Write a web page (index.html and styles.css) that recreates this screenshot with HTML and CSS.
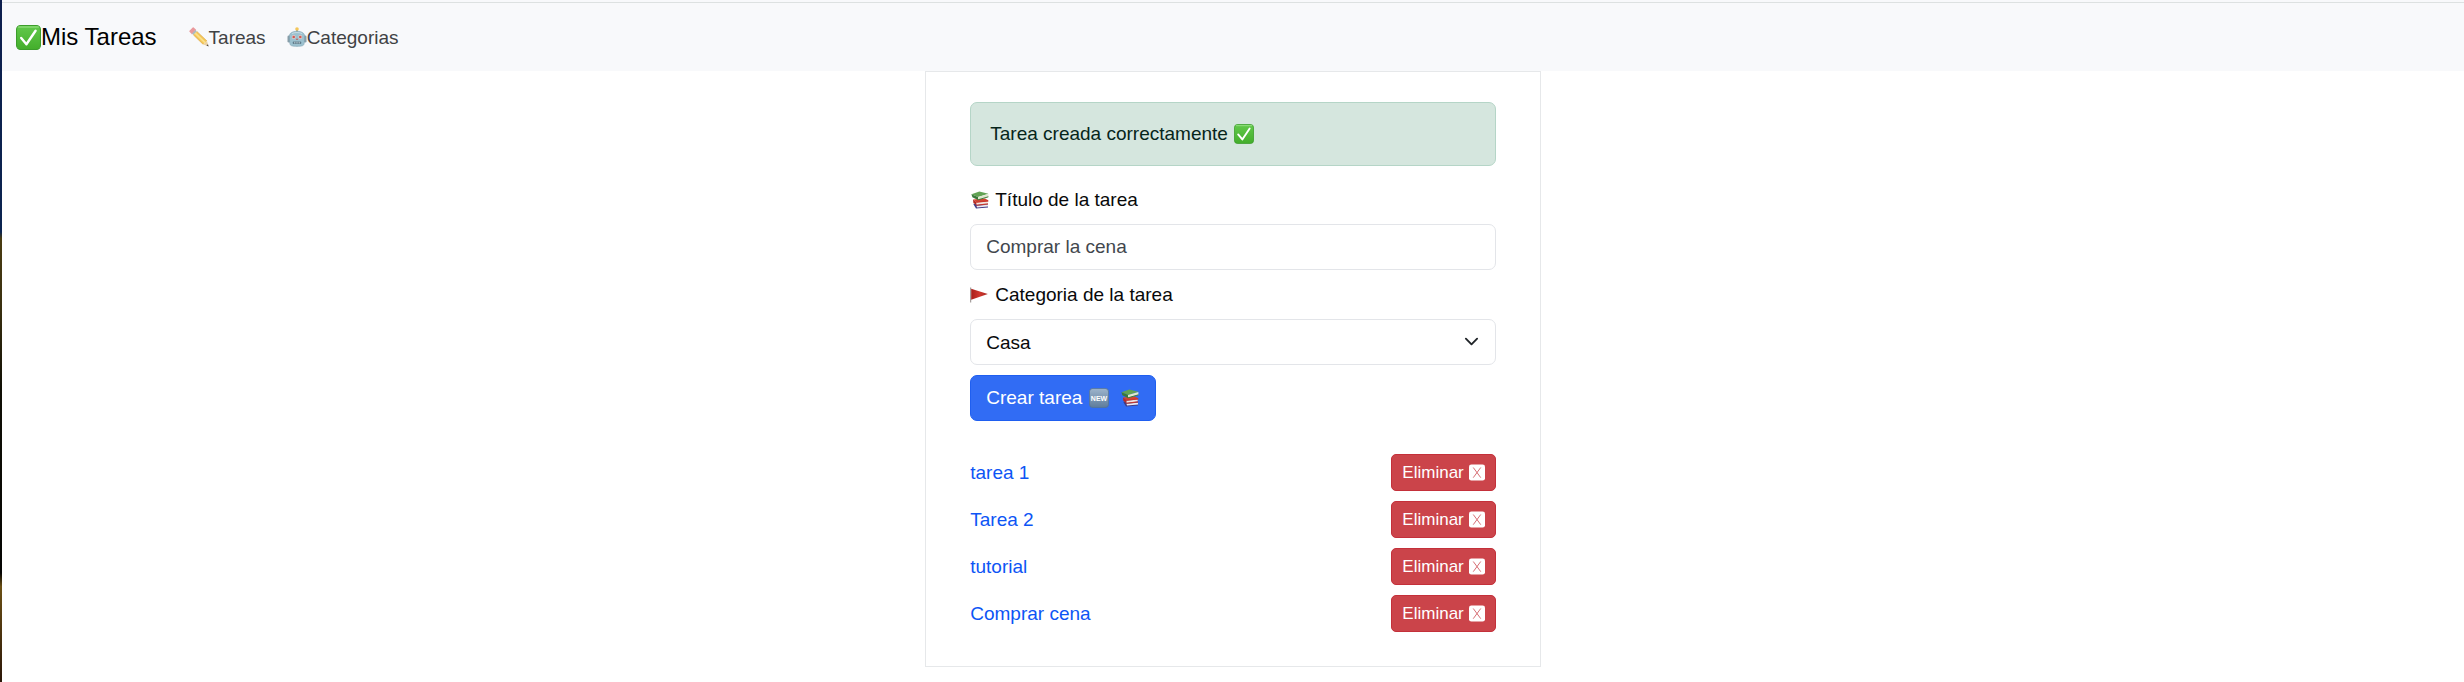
FILE: index.html
```html
<!DOCTYPE html>
<html lang="es">
<head>
<meta charset="utf-8">
<meta name="viewport" content="width=device-width, initial-scale=1">
<title>Mis Tareas</title>
<link rel="stylesheet" href="styles.css">
</head>
<body class="page">
<svg class="sprite" aria-hidden="true">
  <defs>
    <linearGradient id="green" x1="0" y1="0" x2="0" y2="1"><stop offset="0" stop-color="#62c94b"/><stop offset="1" stop-color="#43ae2b"/></linearGradient>
    <linearGradient id="steel" x1="0" y1="0" x2="0" y2="1"><stop offset="0" stop-color="#9db4cc"/><stop offset="1" stop-color="#5e7c9b"/></linearGradient>
    <linearGradient id="flagred" x1="0" y1="0" x2="1" y2="0"><stop offset="0" stop-color="#a9201b"/><stop offset=".5" stop-color="#cf372e"/><stop offset="1" stop-color="#a82722"/></linearGradient>
    <symbol id="check" viewBox="0 0 24 24">
      <rect x=".5" y=".5" width="23" height="23" rx="4" fill="url(#green)" stroke="#3c9d2b"/>
      <path d="M2.5 2h19" stroke="#9be388" stroke-width="1" stroke-linecap="round"/>
      <path d="M5 12.5 10 18.5 18.8 5.5" fill="none" stroke="#fff" stroke-width="2.3" stroke-linecap="round" stroke-linejoin="round"/>
    </symbol>
    <symbol id="pencil" viewBox="0 0 20 20">
      <path d="M1 4.2 4.2 1 6.4 3 3 6.4z" fill="#e9999c" stroke="#e9999c" stroke-width="1.4" stroke-linejoin="round"/>
      <path d="M3 6.4 6.4 3 7.9 4.4 4.4 7.9z" fill="#a9bac2"/>
      <path d="M4.4 7.9 7.9 4.4 18 14 14.2 17.4z" fill="#f3c657"/>
      <path d="M5.5 6.8 6.8 5.5 17 15.2 15.7 16.4z" fill="#fbe08a"/>
      <path d="M4.4 7.9 14.2 17.4M7.9 4.4 18 14" stroke="#dca547" stroke-width=".6"/>
      <path d="M14.2 17.4 18 14 19.5 19.2z" fill="#ecd1a2"/>
      <path d="M17.4 18.5 19 17.2 19.6 19.4z" fill="#4d4944"/>
    </symbol>
    <symbol id="robot" viewBox="0 0 20 20">
      <rect x="9" y="2" width="2" height="4" fill="#91a4ab"/>
      <circle cx="10" cy="2" r="1.8" fill="#f3c65a"/>
      <rect x=".5" y="8.5" width="3" height="7" rx="1.3" fill="#879da8"/>
      <rect x="16.5" y="8.5" width="3" height="7" rx="1.3" fill="#879da8"/>
      <path d="M2.4 9c0-3 3-4.7 7.6-4.7s7.6 1.700 7.600 4.700l-.4 7.600c-.2 2-2 2.800-7.200 2.800s-7-.8-7.200-2.800z" fill="#9cc1cf" stroke="#7c9fae" stroke-width=".5"/>
      <path d="M5 6.600c2-1.400 8-1.400 10 0" fill="none" stroke="#c6dce4" stroke-width="1"/>
      <circle cx="6.700" cy="10" r="1.900" fill="#e6cfcb"/><circle cx="13.300" cy="10" r="1.900" fill="#e6cfcb"/>
      <circle cx="6.700" cy="10" r="1.300" fill="#cf5a54"/><circle cx="13.300" cy="10" r="1.300" fill="#cf5a54"/>
      <path d="m10 11 1.100 2H8.900z" fill="#c46460"/>
      <rect x="5.700" y="14.500" width="8.600" height="2.400" rx="1" fill="#5f7c8b"/>
      <path d="M7.800 14.800v1.800M10 14.800v1.800M12.200 14.800v1.800" stroke="#dbe5e8" stroke-width=".8"/>
    </symbol>
    <symbol id="books" viewBox="0 0 20 20">
      <path d="M3.200 13.800 6 18.600l12-1v-3.200z" fill="#3f3c86"/>
      <path d="m6.500 15.800 11.500-1v1.800l-11 1z" fill="#eceaf2"/>
      <path d="m3 9.500 12-1 3.200 1.700v1.200L7 12.800z" fill="#d44332"/>
      <path d="m3 9.500 3.600 2.700v3.300L3.300 12.800z" fill="#b52d26"/>
      <path d="m6.600 12.700 11-1.300v2.200l-11 1.300z" fill="#f0e4df"/>
      <path d="m6.400 12.300 11.800-1.400M6.400 15.200 18 13.900" stroke="#c8392e" stroke-width="1.100"/>
      <path d="m1.400 4.200 8-2.700 9 2.200L8 7z" fill="#62a354"/>
      <path d="M8 7 18.400 3.900v2.800L8 9.800z" fill="#dfe8cf"/>
      <path d="M1.400 4.200 8 7v3L2.400 7.200z" fill="#3a793a"/>
      <path d="m7.800 9.900 10.600-3.100" stroke="#427d39" stroke-width="1"/>
    </symbol>
    <symbol id="flag" viewBox="0 0 20 20">
      <path d="M.7 2.500v15" stroke="#928b88" stroke-width="1"/>
      <path d="M1.200 3.800 17.800 9 1.200 14.800z" fill="url(#flagred)"/>
    </symbol>
    <symbol id="new" viewBox="0 0 20 20">
      <rect x=".4" y=".4" width="19.200" height="19.200" rx="3.500" fill="url(#steel)" stroke="#567492" stroke-width=".8"/>
      <text x="10" y="12.800" class="new-text">NEW</text>
    </symbol>
    <symbol id="cross" viewBox="0 0 17 17">
      <rect width="17" height="17" rx="2.500" fill="#fff"/>
      <path d="m4.500 3.200 8 10.800M12.500 3.200l-8 10.800" stroke="#d4656c" stroke-width="1"/>
    </symbol>
  </defs>
</svg>

<nav class="navbar">
  <a class="brand" href="#"><svg class="brand-icon" aria-hidden="true"><use href="#check"/></svg>Mis Tareas</a>
  <div class="nav-links">
    <a class="nav-link" href="#"><svg class="icon" aria-hidden="true"><use href="#pencil"/></svg>Tareas</a>
    <a class="nav-link" href="#"><svg class="icon" aria-hidden="true"><use href="#robot"/></svg>Categorias</a>
  </div>
</nav>

<main class="card">
  <div class="alert" role="alert">Tarea creada correctamente <svg class="icon" aria-hidden="true"><use href="#check"/></svg></div>

  <form class="form">
    <label class="label" for="titulo"><svg class="icon" aria-hidden="true"><use href="#books"/></svg>Título de la tarea</label>
    <input class="control" id="titulo" type="text" placeholder="Comprar la cena">
    <label class="label" for="categoria"><svg class="icon" aria-hidden="true"><use href="#flag"/></svg>Categoria de la tarea</label>
    <div class="select-wrap">
      <select class="control" id="categoria"><option>Casa</option></select>
      <svg class="chevron" viewBox="0 0 16 16" aria-hidden="true"><path d="m2 5 6 6 6-6"/></svg>
    </div>
    <button class="submit" type="button">Crear tarea <svg class="icon" aria-hidden="true"><use href="#new"/></svg><svg class="icon icon-books" aria-hidden="true"><use href="#books"/></svg></button>
  </form>

  <ul class="tasks">
    <li class="task"><a class="task-link" href="#">tarea 1</a><button class="delete" type="button">Eliminar <svg class="delete-icon" aria-hidden="true"><use href="#cross"/></svg></button></li>
    <li class="task"><a class="task-link" href="#">Tarea 2</a><button class="delete" type="button">Eliminar <svg class="delete-icon" aria-hidden="true"><use href="#cross"/></svg></button></li>
    <li class="task"><a class="task-link" href="#">tutorial</a><button class="delete" type="button">Eliminar <svg class="delete-icon" aria-hidden="true"><use href="#cross"/></svg></button></li>
    <li class="task"><a class="task-link" href="#">Comprar cena</a><button class="delete" type="button">Eliminar <svg class="delete-icon" aria-hidden="true"><use href="#cross"/></svg></button></li>
  </ul>
</main>
</body>
</html>
```

FILE: styles.css
```css
*, *::before, *::after { box-sizing: border-box; }

.page {
  margin: 0;
  padding-left: 2px;
  min-height: 100vh;
  font-family: "Liberation Sans", Arial, Helvetica, sans-serif;
  font-size: 19px;
  line-height: 29px;
  color: #08090a;
  background:
    linear-gradient(#0d1f4d 0, #0b2450 34%, #4a3c12 35%, #3a3010 45%, #100f05 57%, #050503 84%, #6b5015 86%, #2b1608 100%) left top / 2px 100% no-repeat,
    #fff;
}

.sprite { position: absolute; width: 0; height: 0; }

.navbar {
  display: flex;
  align-items: center;
  gap: 32px;
  padding: 17px 14px 14px;
  background: linear-gradient(#f8f9fb 2px, #dde1e1 2px, #dde1e1 3px, #f8f9fb 3px);
}

.brand, .nav-link {
  display: flex;
  align-items: center;
  text-decoration: none;
}
.brand { font-size: 24px; line-height: 40px; color: #000; }
.brand-icon { width: 25px; height: 25px; }
.nav-links { display: flex; gap: 21px; }
.nav-link { color: #404244; }

.icon { flex: none; width: 20px; height: 20px; }

.card {
  width: 25%;
  min-width: 480px;
  margin: 0 auto;
  padding: 30px 44px 34px;
  border: 1px solid #e6e8ea;
  background: #fff;
}

.alert {
  display: flex;
  align-items: center;
  gap: 6px;
  padding: 16px 19px 17px;
  margin-bottom: 19px;
  border: 1px solid #b5d5c7;
  border-radius: 7px;
  background: #d5e6de;
  color: #06251a;
}

.form { display: grid; gap: 10px; justify-items: start; }

.label { display: flex; align-items: center; gap: 5px; }

.control {
  appearance: none;
  width: 100%;
  height: 46px;
  padding: 0 15px;
  border: 1px solid #e3e5e9;
  border-radius: 7px;
  background: #fff;
  color: #08090a;
  font: inherit;
}
.control::placeholder { color: #42474d; opacity: 1; }

.select-wrap { position: relative; width: 100%; height: 46px; }
.chevron {
  position: absolute;
  top: 15px;
  right: 17px;
  width: 15px;
  height: 15px;
  fill: none;
  stroke: #212529;
  stroke-width: 2;
  stroke-linecap: round;
  stroke-linejoin: round;
  pointer-events: none;
}

.submit {
  display: flex;
  align-items: center;
  gap: 7px;
  height: 46px;
  padding: 0 15px 1px;
  border: 1px solid #1f5ff0;
  border-radius: 7px;
  background: #316cf4;
  color: #fff;
  font: inherit;
}
.icon-books { margin-left: 4px; }
.new-text {
  font: bold 7px "Liberation Sans", Arial, sans-serif;
  fill: #fff;
  text-anchor: middle;
}

.tasks {
  display: grid;
  gap: 10px;
  margin: 33px 0 0;
  padding: 0;
  list-style: none;
}
.task { display: flex; align-items: center; justify-content: space-between; }
.task-link { color: #0d55f5; text-decoration: none; }

.delete {
  display: flex;
  align-items: center;
  gap: 5px;
  height: 37px;
  padding: 0 10px 1px;
  border: 1px solid #c4303a;
  border-radius: 5px;
  background: #cb444a;
  color: #fff;
  font: inherit;
  font-size: 17px;
}
.delete-icon { width: 16px; height: 17px; }
```
